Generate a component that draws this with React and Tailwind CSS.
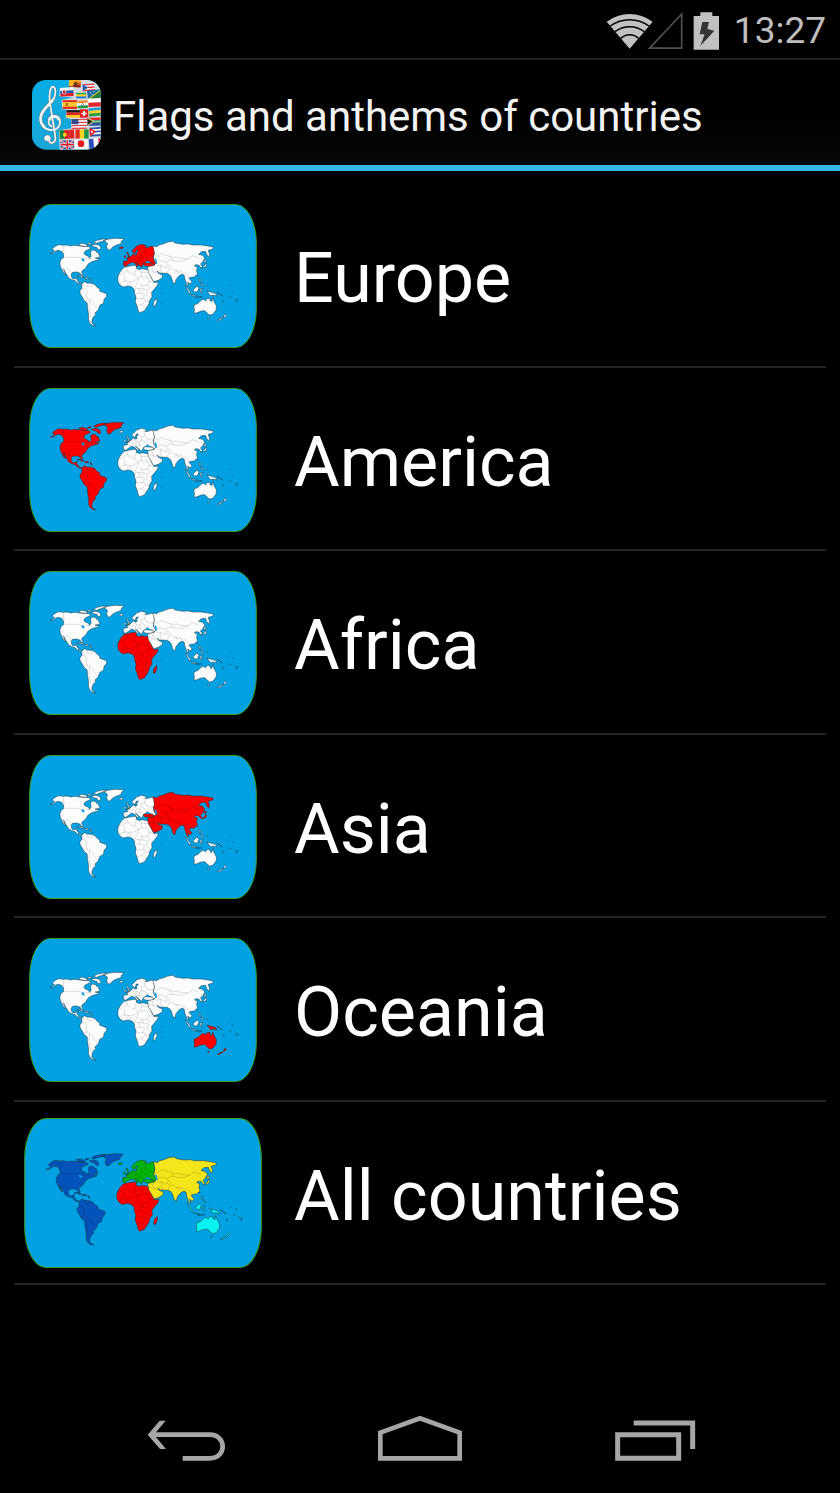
const NORTH_AMERICA =
  "M90 175L100 171L104 167L97 162L104 155L116 149L131 151L142 150L152 153L165 151L180 153L195 154L207 155L213 160L204 164L196 168L192 176L198 181L206 184L209 190L214 184L213 176L212 170L219 165L228 167L230 172L235 172L237 179L241 185L232 188L226 189L232 192L238 190L236 195L222 198L213 202L205 207L201 213L198 219L189 226L185 231L189 238L187 242L180 234L170 231L158 232L154 238L155 247L160 252L168 250L173 246L170 254L175 258L177 264L186 266L183 269L174 265L166 257L156 254L146 249L142 241L137 234L131 223L137 240L131 234L126 224L121 214L120 203L124 192L131 188L131 178L125 169L115 166L108 168L100 174Z";
const ARCTIC =
  "M176 147L188 145L198 148L204 152L196 155L182 152ZM202 147L208 143L216 144L210 148ZM214 151L228 148L238 151L243 158L241 164L234 163L231 157L222 155ZM221 142L232 136L250 132L262 133L252 138L240 141L230 145Z";
const GREENLAND = "M250 137L262 133L285 130L313 131L306 138L303 146L288 151L278 157L271 165L264 164L260 154L264 147L258 140Z";
const CARIBBEAN = "M172 243L180 240L193 246L186 247L180 243ZM194 248L204 247L207 251L196 251ZM210 250L214 251L217 260L214 257Z";
const SOUTH_AMERICA =
  "M186 267L194 260L202 264L214 265L224 268L232 277L240 282L240 289L252 293L261 297L260 305L253 313L251 325L240 331L236 343L230 350L225 354L228 359L221 365L217 374L216 384L222 389L229 393L218 391L210 385L206 374L206 358L203 340L202 324L192 316L186 304L181 297L180 288L186 280Z";
const AFRICA =
  "M313 217L330 213L344 211L350 212L350 220L360 224L365 221L385 224L390 236L398 254L404 263L416 261L414 270L405 281L396 292L397 306L390 316L388 326L382 336L374 348L360 353L356 348L352 334L347 320L349 306L345 296L344 285L338 277L326 273L310 276L301 270L295 261L294 250L296 240L303 228ZM411 310L412 320L406 334L401 333L402 321Z";
const EUROPE =
  "M311 211L311 199L324 197L321 190L328 187L336 182L341 176L345 180L352 179L351 173L356 165L349 166L347 175L342 174L336 168L342 162L352 152L366 148L381 152L376 158L385 157L398 153L402 160L404 176L401 184L402 194L408 204L404 210L398 205L390 202L384 197L376 203L372 206L369 210L366 217L360 212L354 206L347 201L357 211L351 216L350 210L344 204L336 202L326 208L318 214ZM319 191L326 188L325 180L320 172L324 171L328 180L330 189ZM312 186L317 181L319 186L314 189ZM298 159L304 155L311 157L307 161L300 161Z";
const TURKEY = "M370 206L378 203L388 204L399 205L403 211L388 214L376 213Z";
const ASIA =
  "M399 153L412 155L418 150L430 147L445 141L460 139L466 144L490 148L505 147L520 150L545 150L565 153L583 157L578 163L566 166L570 177L568 187L562 179L558 169L546 170L537 178L549 181L556 189L550 200L543 207L548 214L544 219L538 210L528 209L525 213L534 217L531 226L534 237L524 246L514 247L508 250L517 260L512 267L504 261L508 273L502 269L496 252L494 241L488 238L480 241L469 254L466 267L460 262L455 246L450 239L442 235L420 234L412 228L418 236L428 240L428 248L416 256L402 260L394 246L386 233L384 218L388 213L404 210L408 204L402 194L401 184L404 176Z";
const JAPAN = "M552 198L559 195L562 199L556 202ZM558 203L562 210L558 216L548 219L551 215L557 210Z";
const ISLANDS =
  "M497 272L504 279L514 294L511 297L505 288ZM514 299L534 303L531 305L516 302ZM521 284L533 273L538 280L533 291L524 290ZM541 283L550 280L545 286L548 294L543 292ZM539 251L543 253L542 260L545 264L540 262ZM545 267L551 267L550 273L546 271Z";
const OCEANIA =
  "M562 288L573 291L587 295L593 303L580 300L573 302L568 295ZM523 337L524 330L536 325L545 316L552 313L558 318L562 311L572 310L571 316L577 320L580 308L584 320L591 333L590 345L580 358L570 360L563 354L556 347L545 348L530 354L523 354L525 345ZM564 367L570 367L567 372ZM617 357L621 361L615 367L611 367ZM593 376L608 368L611 370L598 377Z";

// inland frontiers
const BORDERS =
  "M132 187H178L188 191L197 189L209 191L216 193M125 220L138 223L149 226L156 233M131 151L131 178M187 280L197 283L203 291L198 299L202 309L211 314L220 323L224 332L232 340M201 264L203 274L214 274L222 270M209 314L208 338L213 368M202 309L190 313";
const AFRICA_BORDERS =
  "M320 216L323 227L308 237L296 240M323 227L340 241L345 238L350 220M364 223V246L356 250L342 258L326 260L322 272M364 246L384 246M364 232H385M345 238L356 250L353 264L345 280M312 240L316 259L302 262M384 246L390 260L383 270L366 272L358 266M390 260L404 263M383 270L392 282M345 282L358 280L360 294L350 297M366 272L370 283L386 284M360 294L374 298L372 310L348 312M386 284L380 300L392 308M372 310L378 318L366 328L354 332M378 318L388 320M366 328L374 338L382 334M326 260L314 256M333 262V273M358 280L370 283";
const ASIA_BORDERS =
  "M402 184L414 182L424 176L438 180L450 184L462 188L470 186L484 190L504 192L520 182L538 190M450 184L460 196L474 199L490 198L504 192M414 199L426 198L438 202L450 196L460 196M412 213L424 210L432 218L440 214L444 208L438 202M424 210L422 224L428 233M440 214L448 222L442 234M448 208L452 219L466 226L484 228L494 240M388 213L398 220L404 232L386 224M404 232L416 236M398 220L404 210M466 226L478 234M494 230L502 238L512 246";
const EUROPE_BORDERS =
  "M324 197L335 200M336 184L340 194L336 200M345 180L350 188L360 190L366 184L376 188L384 196M350 188L346 196L356 200L368 198M366 184L364 174L376 170L372 156M360 190V200M376 170L382 180L401 184M316 199V211";
const ATOLLS =
  "M563 271h2M592 291l8 5 9 7M610 317l4 6M623 284h2M633 270h2M637 288h3M631 307h4M646 312l3 3M656 312l-5 10M532 240l3 4M424 294h2M424 324h2M454 274h2M284 251h2M528 306h20";

function WorldMap({ fills, className }) {
  const land = "#fcfcfc";
  return (
    <svg viewBox="27 27 686 432" preserveAspectRatio="none" className={className} aria-hidden="true">
      <rect x="29" y="28.500" width="682" height="429" rx="62" ry="116" fill="#02a1e3" stroke="#3c9d22" strokeWidth="3" />
      <g stroke="#22363e" strokeOpacity="0.75" strokeWidth="2" strokeLinejoin="round">
        <path d={NORTH_AMERICA + ARCTIC + GREENLAND + CARIBBEAN + SOUTH_AMERICA} fill={fills.america || land} />
        <path d={AFRICA} fill={fills.africa || land} />
        <path d={ASIA + JAPAN} fill={fills.asia || land} />
        <path d={EUROPE} fill={fills.europe || land} />
        <path d={TURKEY} fill={fills.europe || fills.asia || land} />
        <path d={ISLANDS} fill={fills.islands || land} />
        <path d={OCEANIA} fill={fills.oceania || land} />
      </g>
      {/* inland seas */}
      <path d="M404 190L410 192L413 207L408 205ZM377 203L382 197L393 203L386 204ZM184 192L190 190L195 197L190 200Z" fill="#02a1e3" />
      <path
        d={BORDERS + AFRICA_BORDERS + ASIA_BORDERS + EUROPE_BORDERS}
        fill="none"
        stroke="#000"
        strokeOpacity="0.26"
        strokeWidth="1.500"
      />
      <path d={ATOLLS} fill="none" stroke="#124e6c" strokeWidth="3" />
    </svg>
  );
}

// horizontal or vertical banded flag
function Flag({ x, y, w, h, colors, vertical, turn = 0, children }) {
  return (
    <g transform={`translate(${x} ${y}) rotate(${turn})`}>
      {colors.map((c, i) =>
        vertical ? (
          <rect key={i} x={(w / colors.length) * i} width={w / colors.length + 0.3} height={h} fill={c} />
        ) : (
          <rect key={i} y={(h / colors.length) * i} width={w} height={h / colors.length + 0.3} fill={c} />
        )
      )}
      {children}
      <rect width={w} height={h} fill="none" stroke="#fff" strokeOpacity="0.4" strokeWidth="1" />
    </g>
  );
}

const CLEF =
  "M79 239C73 238 72 229 80 227C88 226 91 236 86 242C92 252 104 248 105 236C106 222 91 150 88 120C86 100 91 80 97 79C107 80 108 101 100 116C92 132 66 144 62 171C58 195 76 211 96 209C117 207 123 188 117 176C111 164 91 164 86 178C82 189 88 197 94 198";

function AppIcon() {
  return (
    <svg viewBox="35 59 207 210" className="h-[70px] w-[69px] shrink-0" aria-hidden="true">
      <defs>
        <clipPath id="icon-shape">
          <rect x="35" y="59" width="206" height="209" rx="42" />
        </clipPath>
        <linearGradient id="icon-sky" x1="0" y1="0" x2="0" y2="1">
          <stop offset="0" stopColor="#06ade4" />
          <stop offset="1" stopColor="#19a6d6" />
        </linearGradient>
      </defs>
      <g clipPath="url(#icon-shape)">
        <rect x="35" y="59" width="207" height="210" fill="url(#icon-sky)" />
        <path d="M146 59L150 82L119 83L117 108L160 112L124 118L126 146L138 148L136 172L152 176L154 204L116 210L118 268H242V59Z" fill="#d5dde2" />
        <Flag x={147} y={57} w={36} h={22} turn={5} colors={["#f3a01c", "#d9571f", "#8d2419"]}>
          <path d="M0 0H17L12 20H0Z" fill="#f6b51e" />
          <circle cx="20" cy="11" r="5" fill="#5b3a18" />
        </Flag>
        <Flag x={186} y={72} w={36} h={21} turn={-4} colors={["#e6333a", "#fff", "#e6333a", "#fff", "#e6333a"]}>
          <path d="M0 0L17 11L0 21Z" fill="#2460b5" />
        </Flag>
        <Flag x={119} y={83} w={40} h={26} turn={-3} colors={["#f5f5f5", "#2455b0", "#e01f28"]}>
          <path d="M7 7H17V16L12 20L7 16Z" fill="#c8202f" stroke="#fff" strokeWidth="2" />
        </Flag>
        <Flag x={167} y={97} w={31} h={17} colors={["#2ba54b", "#f7d21e", "#2873cc"]} />
        <g transform="translate(200 91) rotate(-6)">
          <rect width="46" height="27" fill="#1c6ba9" />
          <path d="M0 27L46 0V27Z" fill="#257a3b" />
          <path d="M0 27L46 0" stroke="#e9cf28" strokeWidth="3" />
          <path d="M8 7h4M18 5h4M12 14h4" stroke="#fff" strokeWidth="2" />
        </g>
        <Flag x={127} y={119} w={43} h={27} colors={["#df2b1d", "#f9c61d", "#f9c61d", "#df2b1d"]}>
          <rect x="9" y="9" width="7" height="9" fill="#bc6825" />
        </Flag>
        <Flag x={171} y={121} w={31} h={23} turn={-3} colors={["#f28a23", "#fff", "#24943b"]}>
          <circle cx="15" cy="12" r="3" fill="none" stroke="#2a3d98" strokeWidth="1.500" />
        </Flag>
        <Flag x={203} y={115} w={42} h={25} turn={-3} colors={["#fff", "#e3232d"]} />
        <Flag x={138} y={149} w={41} h={23} colors={["#1e1a18", "#df251c", "#f7c71e"]} />
        <g transform="translate(179 147)">
          <rect width="25" height="25" fill="#dc1f24" />
          <path d="M12.500 5V20M5 12.500H20" stroke="#fff" strokeWidth="5" />
        </g>
        <Flag x={204} y={144} w={42} h={25} turn={-5} colors={["#1c9bd8", "#f6d327", "#279a4a"]} />
        <Flag x={153} y={176} w={47} h={31} turn={-1} colors={["#d94653", "#fff", "#d94653", "#fff", "#d94653", "#fff", "#d94653"]}>
          <rect width="21" height="16" fill="#35498e" />
        </Flag>
        <Flag x={201} y={172} w={42} h={25} turn={-2} colors={["#df2c27", "#22894a", "#2653a4"]}>
          <path d="M0 0L18 12L0 25Z" fill="#17201b" />
          <path d="M0 0L20 12H42M20 12L0 25" fill="none" stroke="#fff" strokeWidth="2" />
          <path d="M1 3L17 12L1 22" fill="none" stroke="#f2bd22" strokeWidth="2" />
        </Flag>
        <Flag x={117} y={210} w={44} h={27} turn={-3} vertical colors={["#16853b", "#dd201f", "#dd201f"]}>
          <circle cx="16" cy="14" r="6" fill="#f3cd24" />
        </Flag>
        <Flag x={165} y={207} w={40} h={28} vertical colors={["#e02a22", "#f8d51e", "#189444"]} />
        <Flag x={207} y={202} w={42} h={27} turn={-4} colors={["#234da1", "#fff", "#234da1", "#fff", "#234da1"]}>
          <path d="M0 0L20 13L0 27Z" fill="#df202d" />
          <circle cx="7" cy="13" r="3" fill="#fff" />
        </Flag>
        <g transform="translate(121 240)">
          <rect width="40" height="27" fill="#263e91" />
          <path d="M0 0L40 27M40 0L0 27" stroke="#fff" strokeWidth="5" />
          <path d="M0 0L40 27M40 0L0 27" stroke="#d4202e" strokeWidth="2" />
          <path d="M20 0V27M0 13H40" stroke="#fff" strokeWidth="9" />
          <path d="M20 0V27M0 13H40" stroke="#d4202e" strokeWidth="5" />
        </g>
        <rect x="164" y="238" width="39" height="27" fill="#fff" />
        <circle cx="182" cy="250" r="10" fill="#e31a20" />
        <Flag x={205} y={236} w={43} h={32} turn={-4} vertical colors={["#264bbb", "#fff", "#e12b33"]} />
      </g>
      <g fill="none" strokeLinecap="round" strokeLinejoin="round">
        <path d={CLEF} stroke="#5e8290" strokeWidth="8" />
        <path d="M98 118C88 134 64 147 61 170C59 183 65 193 72 200M86 178C91 164 111 164 117 177" stroke="#5e8290" strokeWidth="11" />
        <path d={CLEF} stroke="#f3f5f5" strokeWidth="5" />
        <path d="M98 118C88 134 64 147 61 170C59 183 65 193 72 200M87 178C92 165 110 165 116 177" stroke="#f3f5f5" strokeWidth="8" />
        <circle cx="81" cy="234" r="7" fill="#f3f5f5" stroke="#f3f5f5" strokeWidth="2" />
      </g>
    </svg>
  );
}

function StatusIcons() {
  return (
    <svg viewBox="18 24 342 120" className="h-10 w-[114px]" aria-hidden="true">
      {/* wifi */}
      <path d="M89 137L20 56Q52 33 89 33T158 56Z" fill="#c1c1c1" />
      <path d="M31 69Q57 50 89 50T147 69M45 86Q64 71 89 71T133 86M62 106Q74 95 89 95T116 106" fill="none" stroke="#000" strokeWidth="4.500" />
      {/* no signal */}
      <path d="M149 135.500L245 33V135.500Z" fill="none" stroke="#505050" strokeWidth="5" />
      {/* battery */}
      <path d="M301 28H337V39H357V140H281V39H301Z" fill="#c1c1c1" />
      <path d="M307 57L327 57L322 78L343 83L301 129L314 94L299 94Z" fill="#343434" />
    </svg>
  );
}

const RED = "#fb0200";

const regions = [
  { name: "Europe", fills: { europe: RED } },
  { name: "America", fills: { america: RED } },
  { name: "Africa", fills: { africa: RED } },
  { name: "Asia", fills: { asia: RED } },
  { name: "Oceania", fills: { oceania: RED } },
  {
    name: "All countries",
    large: true,
    fills: {
      america: "#0453bb",
      europe: "#05b409",
      africa: RED,
      asia: "#f5e51b",
      islands: "#08eef0",
      oceania: "#08f2ef",
    },
  },
];

export default function App() {
  return (
    <div className="flex min-h-screen flex-col bg-black font-[Roboto,sans-serif] text-white">
      {/* Status bar */}
      <div className="flex h-[60px] items-center justify-end gap-[14px] border-b-2 border-[#202020] pt-[3px] pr-[14px]">
        <StatusIcons />
        <span className="text-[37px] leading-[48px] text-[#bebebe]">13:27</span>
      </div>

      {/* Action bar */}
      <header className="flex h-[111px] items-center gap-3 border-b-6 border-[#33b5e5] bg-linear-to-b from-black to-[#060808] pt-1 pl-8">
        <AppIcon />
        <h1 className="pt-1 text-[42px] leading-[48px] whitespace-nowrap text-[#f3f3f3]">Flags and anthems of countries</h1>
      </header>

      <main className="px-[14px] pt-[13px]">
        <ul>
          {regions.map((r) => (
            <li key={r.name} className="border-b-2 border-[#242424] odd:h-[184px] even:h-[183px]">
              <button type="button" className="flex h-full w-full items-center text-left">
                <span className="flex w-[258px] shrink-0 justify-center">
                  <WorldMap fills={r.fills} className={r.large ? "h-[150px] w-[238px]" : "mt-[2px] h-36 w-[228px]"} />
                </span>
                <span className="pt-[6px] pl-[22px] text-[70px] leading-[80px] whitespace-nowrap">{r.name}</span>
              </button>
            </li>
          ))}
        </ul>
      </main>

      {/* Navigation bar */}
      <nav className="mt-auto flex h-[108px] justify-center">
        <button type="button" aria-label="Back" className="grid w-[234px] place-items-center">
          <svg viewBox="43 42 252 150" className="h-[50px] w-[84px]" aria-hidden="true">
            <path d="M159 175H240C292 175 292 104 240 104H66" fill="none" stroke="#a6a6a6" strokeWidth="14" />
            <path d="M90 62H108L73 104L109 147H91L54 104Z" fill="#a6a6a6" />
          </svg>
        </button>
        <button type="button" aria-label="Home" className="grid w-[234px] place-items-center">
          <svg viewBox="744 42 252 150" className="h-[50px] w-[84px]" aria-hidden="true">
            <path d="M751 98L870 55L989 98V175H751Z" fill="none" stroke="#a6a6a6" strokeWidth="14" />
          </svg>
        </button>
        <button type="button" aria-label="Recent apps" className="grid w-[234px] place-items-center">
          <svg viewBox="68 42 252 150" className="h-[50px] w-[84px]" aria-hidden="true">
            <path d="M85 104H268V175H85ZM133 69H310V147" fill="none" stroke="#a6a6a6" strokeWidth="15" />
          </svg>
        </button>
      </nav>
    </div>
  );
}
